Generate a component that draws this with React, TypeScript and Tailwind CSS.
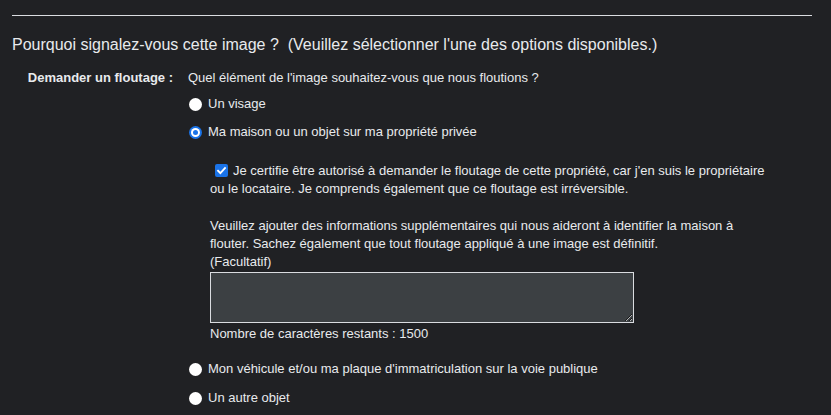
import React from 'react';

const Radio = ({ checked = false }: { checked?: boolean }) =>
  checked ? (
    <span className="inline-flex h-[13px] w-[13px] shrink-0 items-center justify-center rounded-full bg-[#1a73e8]">
      <span className="flex h-[9px] w-[9px] items-center justify-center rounded-full bg-white">
        <span className="h-[5px] w-[5px] rounded-full bg-[#1a73e8]" />
      </span>
    </span>
  ) : (
    <span className="inline-block h-[13px] w-[13px] shrink-0 rounded-full bg-white" />
  );

const Checkbox = () => (
  <span className="inline-flex h-[13px] w-[13px] shrink-0 items-center justify-center rounded-[2px] bg-[#1a73e8]">
    <svg width="11" height="11" viewBox="0 0 12 12" fill="none">
      <path d="M2.2 6.2l2.6 2.6L9.8 3.4" stroke="white" strokeWidth="2" strokeLinecap="square" />
    </svg>
  </span>
);

export default function App() {
  return (
    <div className="h-[415px] w-[831px] overflow-hidden bg-[#202124] text-[#e8eaed] font-['Liberation_Sans',Arial,sans-serif]">
      <div className="px-3 pt-[15px]">
        <div className="h-px w-[800px] bg-[#dadce0]" />
        <h2 className="mt-[19px] text-[16px] leading-[20px]">
          Pourquoi signalez-vous cette image ?&nbsp; (Veuillez sélectionner l'une des options disponibles.)
        </h2>
      </div>

      <div className="mt-[14px] flex text-[13px] leading-[18px]">
        <div className="w-[176px] shrink-0 pr-[3px] text-right font-bold">Demander un floutage :</div>
        <div className="flex-1 pl-[12px]">
          <div>Quel élément de l'image souhaitez-vous que nous floutions ?</div>

          <label className="mt-[8px] flex items-center gap-[6px] pl-[1px]">
            <Radio />
            <span>Un visage</span>
          </label>
          <label className="mt-[10px] flex items-center gap-[6px] pl-[1px]">
            <Radio checked />
            <span>Ma maison ou un objet sur ma propriété privée</span>
          </label>

          <div className="mt-[21px] w-[582px] pl-[22px]">
            <p>
              <span className="mr-[5px] ml-[5px] inline-flex translate-y-[1px] align-baseline">
                <Checkbox />
              </span>
              Je certifie être autorisé à demander le floutage de cette propriété, car j'en suis le propriétaire ou le
              locataire. Je comprends également que ce floutage est irréversible.
            </p>
            <p className="mt-[19px]">
              Veuillez ajouter des informations supplémentaires qui nous aideront à identifier la maison à flouter.
              Sachez également que tout floutage appliqué à une image est définitif.
            </p>
            <p>(Facultatif)</p>
            <textarea className="mt-[1px] block h-[51px] w-[424px] resize border border-[#dadce0] bg-[#3c4043] text-[#e8eaed] outline-none" />
            <p className="mt-[2px]">Nombre de caractères restants : 1500</p>
          </div>

          <label className="mt-[17px] flex items-center gap-[6px] pl-[1px]">
            <Radio />
            <span>Mon véhicule et/ou ma plaque d'immatriculation sur la voie publique</span>
          </label>
          <label className="mt-[11px] flex items-center gap-[6px] pl-[1px]">
            <Radio />
            <span>Un autre objet</span>
          </label>
        </div>
      </div>
    </div>
  );
}
